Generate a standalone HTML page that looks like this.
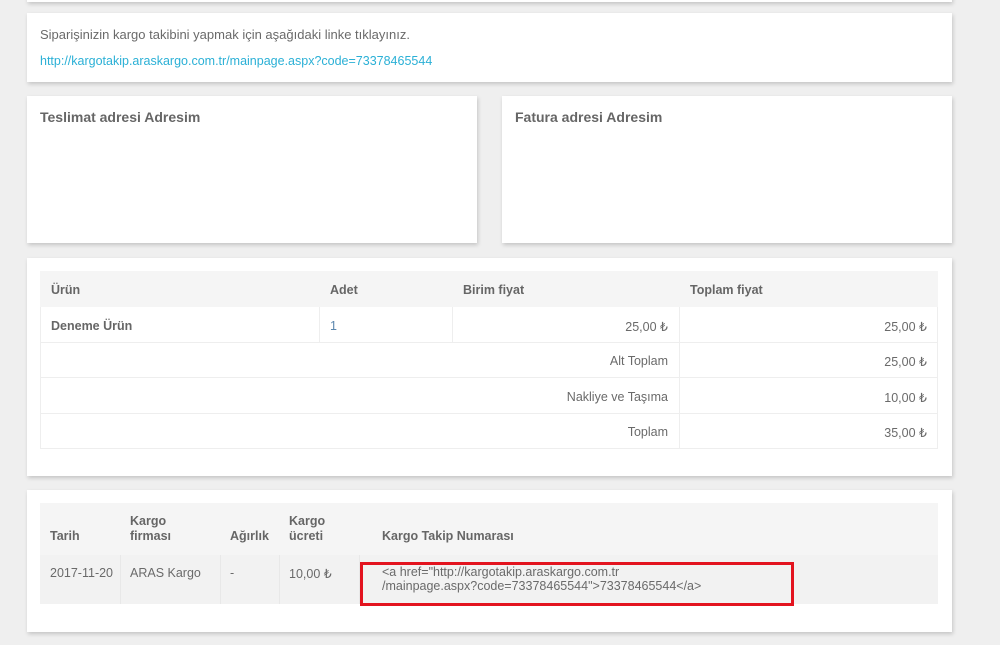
<!DOCTYPE html>
<html><head><meta charset="utf-8"><style>
*{margin:0;padding:0;box-sizing:border-box}
body{width:1000px;height:645px;background:#efefef;font-family:"Liberation Sans",sans-serif;font-size:12.5px;color:#6a6a6a;position:relative;overflow:hidden}
.card{position:absolute;background:#fff;box-shadow:1px 2px 4px rgba(0,0,0,.18)}
.abs{position:absolute;white-space:nowrap}
.b{font-weight:bold;color:#666}
.cell{position:absolute;border-right:1px solid #eee;border-bottom:1px solid #eee}
.h{font-size:14px;font-weight:bold;color:#666}
</style></head><body>
<div class="card" style="left:27px;top:-20px;width:925px;height:22px"></div>

<div class="card" style="left:27px;top:13px;width:925px;height:69px">
 <div class="abs" style="left:13px;top:14px;font-size:13px">Siparişinizin kargo takibini yapmak için aşağıdaki linke tıklayınız.</div>
 <div class="abs" style="left:13px;top:41px;color:#2bb0d6">http://kargotakip.araskargo.com.tr/mainpage.aspx?code=73378465544</div>
</div>

<div class="card" style="left:27px;top:96px;width:450px;height:147px">
 <div class="abs h" style="left:13px;top:13px">Teslimat adresi Adresim</div>
</div>
<div class="card" style="left:502px;top:96px;width:450px;height:147px">
 <div class="abs h" style="left:13px;top:13px">Fatura adresi Adresim</div>
</div>

<div class="card" style="left:27px;top:258px;width:925px;height:218px">
 <div style="position:absolute;left:13px;top:13px;width:898px;height:36px;background:#f5f5f5"></div>
 <div class="abs b" style="left:24px;top:25px">Ürün</div>
 <div class="abs b" style="left:303px;top:25px">Adet</div>
 <div class="abs b" style="left:436px;top:25px">Birim fiyat</div>
 <div class="abs b" style="left:663px;top:25px">Toplam fiyat</div>

 <div class="cell" style="left:13px;top:49px;width:280px;height:36px;border-left:1px solid #eee"></div>
 <div class="cell" style="left:293px;top:49px;width:133px;height:36px"></div>
 <div class="cell" style="left:426px;top:49px;width:227px;height:36px"></div>
 <div class="cell" style="left:653px;top:49px;width:258px;height:36px"></div>
 <div class="cell" style="left:13px;top:85px;width:640px;height:35px;border-left:1px solid #eee"></div>
 <div class="cell" style="left:653px;top:85px;width:258px;height:35px"></div>
 <div class="cell" style="left:13px;top:120px;width:640px;height:36px;border-left:1px solid #eee"></div>
 <div class="cell" style="left:653px;top:120px;width:258px;height:36px"></div>
 <div class="cell" style="left:13px;top:156px;width:640px;height:35px;border-left:1px solid #eee"></div>
 <div class="cell" style="left:653px;top:156px;width:258px;height:35px"></div>

 <div class="abs b" style="left:24px;top:61px">Deneme Ürün</div>
 <div class="abs" style="left:303px;top:61px;color:#5b86ad">1</div>
 <div class="abs" style="right:284px;top:61px">25,00 ₺</div>
 <div class="abs" style="right:25px;top:61px">25,00 ₺</div>
 <div class="abs" style="right:284px;top:96px">Alt Toplam</div>
 <div class="abs" style="right:25px;top:96px">25,00 ₺</div>
 <div class="abs" style="right:284px;top:132px">Nakliye ve Taşıma</div>
 <div class="abs" style="right:25px;top:132px">10,00 ₺</div>
 <div class="abs" style="right:284px;top:167px">Toplam</div>
 <div class="abs" style="right:25px;top:167px">35,00 ₺</div>
</div>

<div class="card" style="left:27px;top:490px;width:925px;height:142px">
 <div style="position:absolute;left:13px;top:13px;width:898px;height:52px;background:#f5f5f5"></div>
 <div style="position:absolute;left:13px;top:65px;width:898px;height:49px;background:#f2f2f2"></div>
 <div style="position:absolute;left:93px;top:65px;width:1px;height:49px;background:#e8e8e8"></div>
 <div style="position:absolute;left:193px;top:65px;width:1px;height:49px;background:#e8e8e8"></div>
 <div style="position:absolute;left:252px;top:65px;width:1px;height:49px;background:#e8e8e8"></div>
 <div style="position:absolute;left:332px;top:65px;width:1px;height:49px;background:#e8e8e8"></div>
 <div class="abs b" style="left:23px;top:39px">Tarih</div>
 <div class="abs b" style="left:103px;top:24px;line-height:15px">Kargo<br>firması</div>
 <div class="abs b" style="left:203px;top:39px">Ağırlık</div>
 <div class="abs b" style="left:262px;top:24px;line-height:15px">Kargo<br>ücreti</div>
 <div class="abs b" style="left:355px;top:39px">Kargo Takip Numarası</div>
 <div class="abs" style="left:23px;top:76px">2017-11-20</div>
 <div class="abs" style="left:103px;top:76px">ARAS Kargo</div>
 <div class="abs" style="left:203px;top:76px">-</div>
 <div class="abs" style="left:262px;top:76px">10,00 ₺</div>
 <div class="abs" style="left:355px;top:75px;line-height:14px">&lt;a href="http://kargotakip.araskargo.com.tr<br>/mainpage.aspx?code=73378465544"&gt;73378465544&lt;/a&gt;</div>
 <div style="position:absolute;left:333px;top:72px;width:434px;height:44px;border:3px solid #e3141f"></div>
</div>
</body></html>
